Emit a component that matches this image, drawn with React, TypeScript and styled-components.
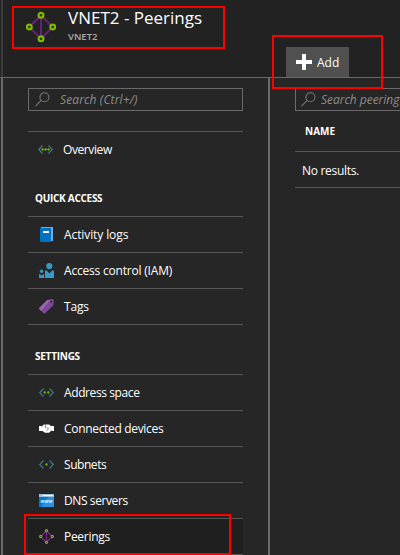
import React from "react";
import styled, { createGlobalStyle } from "styled-components";

const GlobalStyle = createGlobalStyle`
  * { box-sizing: border-box; }
  body { margin: 0; background: #262626; overflow: hidden; }
`;

const Page = styled.div`
  position: relative;
  width: 400px;
  height: 555px;
  display: flex;
  flex-direction: column;
  overflow: hidden;
  background: #262626;
  color: #fff;
  font-family: "Open Sans", "Noto Sans", sans-serif;
  font-size: 12px;
  white-space: nowrap;
`;

const Header = styled.header`
  display: flex;
  flex: none;
  height: 78px;
  background: #222;
  border-bottom: 1px solid #686868;
`;

const HeaderEdge = styled.div`
  width: 2px;
  margin-left: 1px;
  background: #3c3c3c;
`;

const Brand = styled.div`
  display: flex;
  width: 283px;
  padding: 10px 0 0 23px;
  gap: 12px;
`;

const Titles = styled.div`
  display: flex;
  flex-direction: column;
  margin-top: -4px;
`;

const Text = styled.span<{ $spacing?: number }>`
  letter-spacing: ${(p) => p.$spacing ?? 0}px;
`;

const Title = styled.h1`
  margin: 0;
  font-size: 17px;
  font-weight: 400;
  line-height: 24px;
`;

const Subtitle = styled.div`
  font-size: 9.5px;
  font-weight: 600;
  line-height: 13px;
  color: #aaa;
`;

const AddButton = styled.button`
  display: flex;
  align-items: center;
  align-self: flex-end;
  gap: 5px;
  width: 63px;
  height: 30px;
  padding: 0 0 0 10px;
  border: 0;
  background: #505050;
  color: #fff;
  font: inherit;
  font-weight: 500;
`;

const Body = styled.div`
  display: flex;
  flex: 1;
  min-height: 0;
`;

const Menu = styled.nav`
  flex: none;
  width: 269px;
  margin-left: 1px;
  padding: 10px 25px 0 25px;
  border-left: 2px solid #6a6a6a;
  border-right: 2px solid #6a6a6a;
`;

const Content = styled.main`
  flex: none;
  width: 150px;
  padding: 10px 0 0 25px;
`;

const SearchBox = styled.div<{ $inset: number; $gap: number }>`
  display: flex;
  align-items: center;
  height: 23px;
  padding-left: ${(p) => p.$inset}px;
  gap: ${(p) => p.$gap}px;
  border: 1px solid #6a6a6a;
  color: #8e8e8e;
  font-style: italic;
`;

const Group = styled.section<{ $gap: number }>`
  margin-top: ${(p) => p.$gap}px;
`;

const GroupTitle = styled.h2`
  height: 36px;
  margin: 0;
  padding-left: 7px;
  font-size: 10px;
  font-weight: 700;
  line-height: 36px;
`;

const Row = styled.div<{ $active?: boolean; $inset?: number }>`
  display: flex;
  align-items: center;
  gap: 10px;
  height: 36px;
  padding-left: ${(p) => p.$inset ?? 11}px;
  border-top: 1px solid #565656;
  background: ${(p) => (p.$active ? "#1f1f1f" : "transparent")};
  font-weight: 500;
  line-height: 16px;

  span {
    margin-top: 1px;
  }
`;

const Rule = styled.div`
  height: 1px;
  background: #565656;
`;

const ColumnHead = styled.div`
  height: 40px;
  padding-left: 10px;
  font-size: 10px;
  font-weight: 700;
  line-height: 41px;
`;

const EmptyRow = styled.div`
  height: 36px;
  padding-left: 7px;
  border-top: 1px solid #565656;
  font-weight: 500;
  line-height: 37px;
`;

const Highlight = styled.div<{ $x: number; $y: number; $w: number; $h: number }>`
  position: absolute;
  left: ${(p) => p.$x}px;
  top: ${(p) => p.$y}px;
  width: ${(p) => p.$w}px;
  height: ${(p) => p.$h}px;
  border: 2px solid #f00;
  pointer-events: none;
`;

const Glyph = styled.svg`
  display: block;
  flex: none;
`;

const PeeringLarge = () => (
  <Glyph width="30" height="34" viewBox="0 0 30 34">
    <path d="M15 5.3 3.3 17 15 28.7 26.7 17ZM15 5.3v23.4" fill="none" stroke="#68217a" strokeWidth="2" />
    <g fill="#26331c" stroke="#7fba00" strokeWidth="2.2">
      <circle cx="15" cy="5.3" r="2.4" />
      <circle cx="3.3" cy="17" r="2.4" />
      <circle cx="26.7" cy="17" r="2.4" />
      <circle cx="15" cy="28.7" r="2.4" />
    </g>
  </Glyph>
);

const PeeringSmall = () => (
  <Glyph width="15" height="15" viewBox="0 0 15 15">
    <path d="M7.5 1.7 1.7 7.5l5.8 5.8 5.8-5.8ZM7.5 1.7v11.6" fill="none" stroke="#7a2a8c" strokeWidth="1.2" />
    <g fill="#1f1f1f" stroke="#7fba00" strokeWidth="1.1">
      <circle cx="7.5" cy="1.7" r="1.1" />
      <circle cx="1.7" cy="7.5" r="1.1" />
      <circle cx="13.3" cy="7.5" r="1.1" />
      <circle cx="7.5" cy="13.3" r="1.1" />
    </g>
  </Glyph>
);

const Network = ({ dots }: { dots: number[] }) => (
  <Glyph width="15" height="15" viewBox="0 0 15 15">
    <path d="M4.5 3.5.7 7.5l3.8 4M10.5 3.5l3.8 4-3.8 4" fill="none" stroke="#35809f" strokeWidth="1.1" />
    {dots.length === 3 && <path d="M4 7.5h7" stroke="#4c7010" strokeWidth=".7" />}
    {dots.map((x) => (
      <circle key={x} cx={x} cy="7.5" r="1.15" fill="#7fba00" />
    ))}
  </Glyph>
);

const Magnifier = () => (
  <Glyph width="15" height="15" viewBox="0 0 15 15">
    <g fill="none" stroke="#777" strokeWidth="1.1">
      <circle cx="9.4" cy="5.2" r="4.5" />
      <path d="m6.2 8.4-5.7 5.8" />
    </g>
  </Glyph>
);

const Plus = () => (
  <Glyph width="16" height="16" viewBox="0 0 16 16">
    <path d="M6 0h4v6h6v4h-6v6H6v-6H0V6h6Z" fill="#fff" />
  </Glyph>
);

const Book = () => (
  <Glyph width="15" height="15" viewBox="0 0 15 15">
    <path d="M2 0h12v14H2Z" fill="#6aaee2" />
    <path d="M1 1h11v14H2a1 1 0 0 1-1-1Z" fill="#0072c6" />
    <path d="M4 4h6v2H4Z" fill="#fff" />
  </Glyph>
);

const People = () => (
  <Glyph width="15" height="15" viewBox="0 0 15 15">
    <g fill="#3999c6">
      <circle cx="10.3" cy="3.1" r="3.1" />
      <circle cx="2.6" cy="8.3" r="1.7" />
      <path d="M6 15V8.4Q6 7.2 7.4 7.2l3 3.3 3-3.3Q15 7.2 15 8.4V15ZM0 15v-3.2q0-.8.8-.8l1.8 1.7L4.4 11q.8 0 .8.8V15Z" />
    </g>
  </Glyph>
);

const Tag = () => (
  <Glyph width="15" height="15" viewBox="0 0 15 15">
    <path d="M8 1.2 13 0q1.5 0 1.8 1.5l-.5 4.8L6.4 14q-1 1-2 0L.7 10.4q-1-1 0-2Z" fill="#804998" />
    <path d="M8 1.2.7 8.4q-1 1 0 2l1.5 1.5L11.5.4Z" fill="#9966b0" />
    <circle cx="12.2" cy="2.7" r="1" fill="#262626" />
  </Glyph>
);

const Devices = () => (
  <Glyph width="15" height="15" viewBox="0 0 15 15">
    <path d="M0 5h3l2-1.5h5L12 5h3v5h-3l-2 1.8H6L3.5 10H0Z" fill="#fff" />
    <path d="M6.3 3.5v3.2h1.3M9 6.3v2.2L7.5 9.7" fill="none" stroke="#666" strokeWidth=".8" />
    <path d="M3 5.3v1M12 9v1" stroke="#777" strokeWidth=".8" />
  </Glyph>
);

const Www = styled.text`
  font: italic 700 5px "Open Sans", sans-serif;
`;

const Browser = () => (
  <Glyph width="15" height="13" viewBox="0 0 15 13">
    <path d="M0 0h15v13H0Z" fill="#0078d0" />
    <path d="M9 3h6v10H2Z" fill="#2e8fdc" />
    <path d="M0 0h15v3H0Z" fill="#9bbfd8" />
    <path d="M3.5 1h10v1h-10Z" fill="#fff" />
    <Www x="1.5" y="9.4" textLength="12" fill="#d8ebfa">www</Www>
  </Glyph>
);

type Item = { label: string; icon: React.ReactNode; spacing: number; active?: boolean };

const quickAccess: Item[] = [
  { label: "Activity logs", icon: <Book />, spacing: -0.1 },
  { label: "Access control (IAM)", icon: <People />, spacing: -0.2 },
  { label: "Tags", icon: <Tag />, spacing: -0.2 },
];

const settings: Item[] = [
  { label: "Address space", icon: <Network dots={[5.7, 9.3]} />, spacing: -0.4 },
  { label: "Connected devices", icon: <Devices />, spacing: -0.32 },
  { label: "Subnets", icon: <Network dots={[7.5]} />, spacing: -0.45 },
  { label: "DNS servers", icon: <Browser />, spacing: -0.4 },
  { label: "Peerings", icon: <PeeringSmall />, spacing: -0.3, active: true },
];

const Rows = ({ items }: { items: Item[] }) => (
  <>
    {items.map((item) => (
      <Row key={item.label} $active={item.active}>
        {item.icon}
        <Text $spacing={item.spacing}>{item.label}</Text>
      </Row>
    ))}
    <Rule />
  </>
);

export default function App() {
  return (
    <Page>
      <GlobalStyle />
      <Header>
        <HeaderEdge />
        <Brand>
          <PeeringLarge />
          <Titles>
            <Title><Text>VNET2 - Peerings</Text></Title>
            <Subtitle><Text>VNET2</Text></Subtitle>
          </Titles>
        </Brand>
        <AddButton><Plus /><Text>Add</Text></AddButton>
      </Header>
      <Body>
        <Menu>
          <SearchBox $inset={6} $gap={10}>
            <Magnifier />
            <Text $spacing={0.12}>Search (Ctrl+/)</Text>
          </SearchBox>
          <Group $gap={20}>
            <Row $inset={10}>
              <Network dots={[4.5, 7.5, 10.5]} />
              <Text $spacing={-0.4}>Overview</Text>
            </Row>
          </Group>
          <Group $gap={13}>
            <GroupTitle><Text $spacing={-0.28}>QUICK ACCESS</Text></GroupTitle>
            <Rows items={quickAccess} />
          </Group>
          <Group $gap={13}>
            <GroupTitle><Text $spacing={-0.25}>SETTINGS</Text></GroupTitle>
            <Rows items={settings} />
          </Group>
        </Menu>
        <Content>
          <SearchBox $inset={5} $gap={5}>
            <Magnifier />
            <Text $spacing={-0.03}>Search peering</Text>
          </SearchBox>
          <ColumnHead><Text>NAME</Text></ColumnHead>
          <EmptyRow><Text $spacing={-0.3}>No results.</Text></EmptyRow>
          <Rule />
        </Content>
      </Body>
      <Highlight $x={12} $y={6} $w={213} $h={43} />
      <Highlight $x={272} $y={35} $w={111} $h={54} />
      <Highlight $x={24} $y={514} $w={207} $h={41} />
    </Page>
  );
}
